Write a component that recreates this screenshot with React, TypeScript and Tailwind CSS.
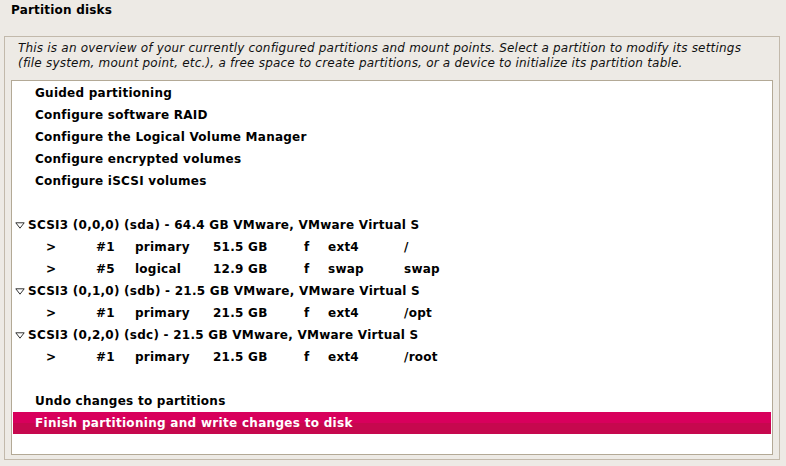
import React from "react";

const font = { fontFamily: '"DejaVu Sans", "Liberation Sans", sans-serif' };

function Tri() {
  return (
    <svg width="10" height="7" viewBox="0 0 10 7" className="shrink-0 ml-[1px]">
      <polygon points="0.8,0.8 9.2,0.8 5,6.2" fill="none" stroke="#333333" strokeWidth="1" />
    </svg>
  );
}

type Part = { n: string; type: string; size: string; fs: string; mp: string };

function PartRow({ p }: { p: Part }) {
  return (
    <div className="flex h-[22px] items-center pl-[33px]">
      <span className="w-[50px]">&gt;</span>
      <span className="w-[39px]">{p.n}</span>
      <span className="w-[78px]">{p.type}</span>
      <span className="w-[91px]">{p.size}</span>
      <span className="w-[24px]">f</span>
      <span className="w-[76px]">{p.fs}</span>
      <span>{p.mp}</span>
    </div>
  );
}

function DiskRow({ label }: { label: string }) {
  return (
    <div className="flex h-[22px] items-center pl-[1px]">
      <Tri />
      <span className="ml-[3px]">{label}</span>
    </div>
  );
}

function Plain({ label, selected }: { label: string; selected?: boolean }) {
  return (
    <div
      className={
        selected
          ? "flex h-[22px] items-center pl-[22px] text-white tracking-[0.3px] bg-gradient-to-b from-[#d8005c] from-50% to-[#c6084e] to-50%"
          : "flex h-[22px] items-center pl-[22px]"
      }
    >
      {label}
    </div>
  );
}

export default function App() {
  return (
    <div className="w-[786px] h-[466px] bg-[#edeae5] text-black overflow-hidden" style={font}>
      <div className="h-[36px] pl-[11px] pt-[3px] text-[12px] font-bold tracking-[0.2px] leading-[15px]">
        Partition disks
      </div>
      <div className="ml-[4px] w-[776px] h-[424px] border border-[#c2b9ab]">
        <div className="pl-[13px] pt-[4px] text-[12px] italic leading-[15px] tracking-[0.2px] text-[#111]">
          <div>
            This is an overview of your currently configured partitions and mount points. Select a partition to modify its settings
          </div>
          <div>
            (file system, mount point, etc.), a free space to create partitions, or a device to initialize its partition table.
          </div>
        </div>
        <div className="ml-[6px] mt-[9px] w-[762px] h-[375px] border border-[#b3a996] bg-white p-[1px] text-[12px] font-bold tracking-[0.25px] overflow-hidden">
          <Plain label="Guided partitioning" />
          <Plain label="Configure software RAID" />
          <Plain label="Configure the Logical Volume Manager" />
          <Plain label="Configure encrypted volumes" />
          <Plain label="Configure iSCSI volumes" />
          <div className="h-[22px]" />
          <DiskRow label="SCSI3 (0,0,0) (sda) - 64.4 GB VMware, VMware Virtual S" />
          <PartRow p={{ n: "#1", type: "primary", size: "51.5 GB", fs: "ext4", mp: "/" }} />
          <PartRow p={{ n: "#5", type: "logical", size: "12.9 GB", fs: "swap", mp: "swap" }} />
          <DiskRow label="SCSI3 (0,1,0) (sdb) - 21.5 GB VMware, VMware Virtual S" />
          <PartRow p={{ n: "#1", type: "primary", size: "21.5 GB", fs: "ext4", mp: "/opt" }} />
          <DiskRow label="SCSI3 (0,2,0) (sdc) - 21.5 GB VMware, VMware Virtual S" />
          <PartRow p={{ n: "#1", type: "primary", size: "21.5 GB", fs: "ext4", mp: "/root" }} />
          <div className="h-[22px]" />
          <Plain label="Undo changes to partitions" />
          <Plain label="Finish partitioning and write changes to disk" selected />
        </div>
      </div>
    </div>
  );
}
